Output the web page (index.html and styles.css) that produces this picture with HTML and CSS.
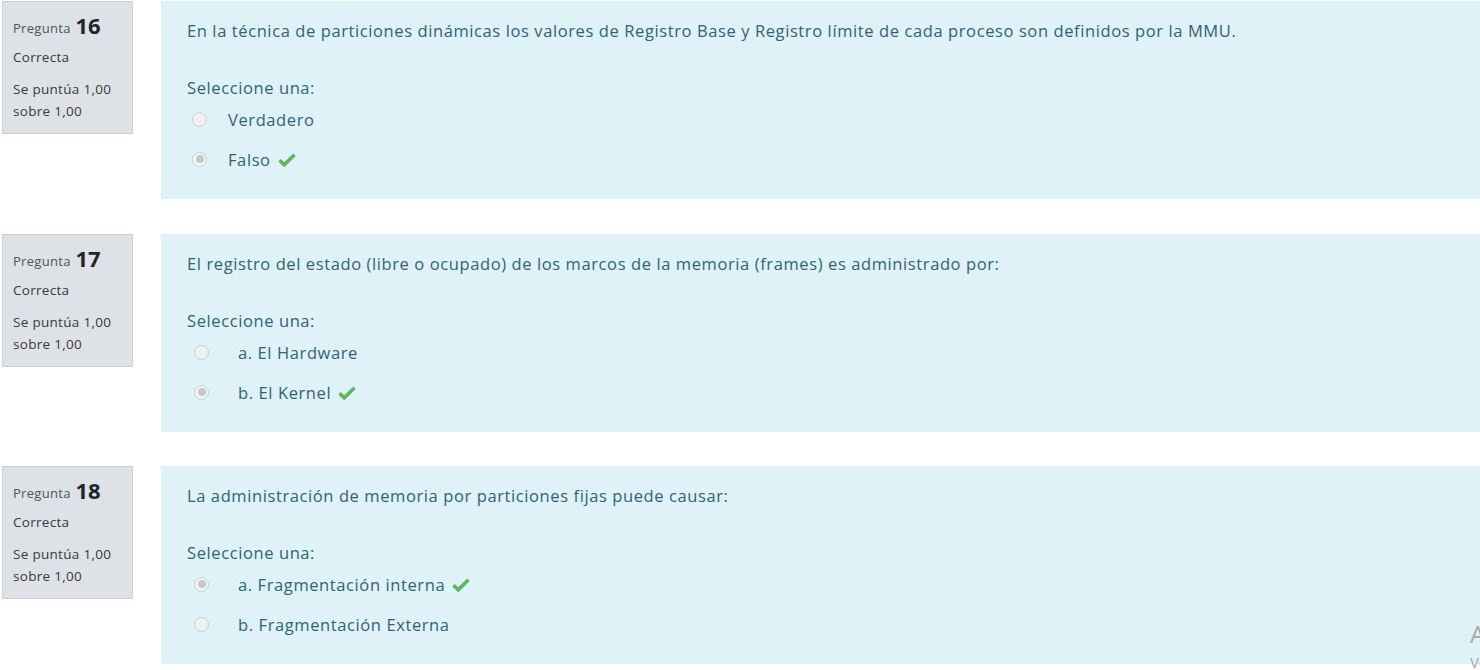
FILE: index.html
```html
<!DOCTYPE html>
<html lang="es">
<head>
<meta charset="utf-8">
<title>Revisión del intento</title>
<link rel="stylesheet" href="styles.css">
</head>
<body>
<div class="page">
  <div class="que">
    <div class="info">
      <h3 class="no">Pregunta <span class="qno">16</span></h3>
      <div class="state">Correcta</div>
      <div class="grade">Se puntúa 1,00 sobre 1,00</div>
    </div>
    <div class="formulation">
      <div class="qtext">En la técnica de particiones dinámicas los valores de Registro Base y Registro límite de cada proceso son definidos por la MMU.</div>
      <div class="prompt">Seleccione una:</div>
      <div class="answer tf">
        <div class="opt"><span class="radio"></span><span class="lbl">Verdadero</span></div>
        <div class="opt"><span class="radio checked"></span><span class="lbl">Falso</span><svg class="check" viewBox="0 0 18 14"><path d="M1.5 7.2 L6.3 11.8 L16.5 1.8" /></svg></div>
      </div>
    </div>
  </div>

  <div class="que">
    <div class="info">
      <h3 class="no">Pregunta <span class="qno">17</span></h3>
      <div class="state">Correcta</div>
      <div class="grade">Se puntúa 1,00 sobre 1,00</div>
    </div>
    <div class="formulation">
      <div class="qtext">El registro del estado (libre o ocupado) de los marcos de la memoria (frames) es administrado por:</div>
      <div class="prompt">Seleccione una:</div>
      <div class="answer mc">
        <div class="opt"><span class="radio"></span><span class="lbl">a. El Hardware</span></div>
        <div class="opt"><span class="radio checked"></span><span class="lbl">b. El Kernel</span><svg class="check" viewBox="0 0 18 14"><path d="M1.5 7.2 L6.3 11.8 L16.5 1.8" /></svg></div>
      </div>
    </div>
  </div>

  <div class="que">
    <div class="info">
      <h3 class="no">Pregunta <span class="qno">18</span></h3>
      <div class="state">Correcta</div>
      <div class="grade">Se puntúa 1,00 sobre 1,00</div>
    </div>
    <div class="formulation">
      <div class="qtext">La administración de memoria por particiones fijas puede causar:</div>
      <div class="prompt">Seleccione una:</div>
      <div class="answer mc">
        <div class="opt"><span class="radio checked"></span><span class="lbl">a. Fragmentación interna</span><svg class="check" viewBox="0 0 18 14"><path d="M1.5 7.2 L6.3 11.8 L16.5 1.8" /></svg></div>
        <div class="opt"><span class="radio"></span><span class="lbl">b. Fragmentación Externa</span></div>
      </div>
    </div>
  </div>
</div>
<div class="watermark">
  <div class="wm-title">Activar Windows</div>
  <div class="wm-sub">Ve a Configuración para activar Windows.</div>
</div>
</body>
</html>
```

FILE: styles.css
```css
html, body {
  margin: 0;
  padding: 0;
  background: #ffffff;
  overflow: hidden;
}
body {
  font-family: "Open Sans", "Noto Sans", sans-serif;
  color: #2f6473;
  width: 1480px;
  height: 670px;
  position: relative;
}
.page {
  padding: 1px 0 0 2px;
}
.que {
  display: flex;
  align-items: flex-start;
  margin-bottom: 34px;
}
.que:first-child {
  margin-bottom: 35px;
}
.info {
  box-sizing: border-box;
  width: 131px;
  height: 133px;
  flex: none;
  background: #dee2e6;
  border: 1px solid #cad0d7;
  padding: 8px 6px 0 10px;
  color: #373a3c;
  font-size: 13.5px;
  letter-spacing: 0.3px;
  line-height: 22px;
}
.no {
  margin: 0 0 3px 0;
  font-weight: normal;
  font-size: 13px;
  letter-spacing: 0.3px;
  line-height: 30px;
  color: #50545a;
}
.qno {
  font-size: 22px;
  font-weight: 700;
  letter-spacing: 0;
  color: #222528;
  vertical-align: -1px;
  margin-left: 1px;
}
.state {
  margin-bottom: 10px;
}
.grade {
  line-height: 22px;
}
.formulation {
  box-sizing: border-box;
  flex: 1;
  margin-left: 28px;
  height: 198px;
  background: #def2f8;
  padding: 18px 0 0 26px;
  font-size: 16.5px;
  letter-spacing: 0.6px;
  line-height: 24px;
}
.qtext {
  margin-bottom: 33px;
}
.opt {
  display: flex;
  align-items: center;
  height: 40px;
}
.radio {
  box-sizing: border-box;
  width: 15px;
  height: 15px;
  border-radius: 50%;
  border: 1px solid #cbcdcf;
  background: #eef0f2;
  position: relative;
  flex: none;
  margin-top: -2px;
}
.radio.checked {
  background: #f3f4f5;
}
.radio.checked::after {
  content: "";
  position: absolute;
  left: 2.5px;
  top: 2.5px;
  width: 8px;
  height: 8px;
  border-radius: 50%;
  background: #c5c7c9;
}
.tf .radio {
  margin-left: 5px;
  margin-right: 21px;
}
.mc .radio {
  margin-left: 7px;
  margin-right: 29px;
}
.check {
  width: 18px;
  height: 14px;
  margin-left: 7px;
  fill: none;
  stroke: #5cb85c;
  stroke-width: 3.6;
  stroke-linecap: butt;
}
.watermark {
  position: absolute;
  left: 1470px;
  top: 620px;
  color: #a9acae;
  white-space: nowrap;
  font-family: "Noto Sans", sans-serif;
}
.wm-title {
  font-size: 24px;
  line-height: 28px;
}
.wm-sub {
  margin-top: 4px;
  font-size: 15px;
  line-height: 20px;
}
```
